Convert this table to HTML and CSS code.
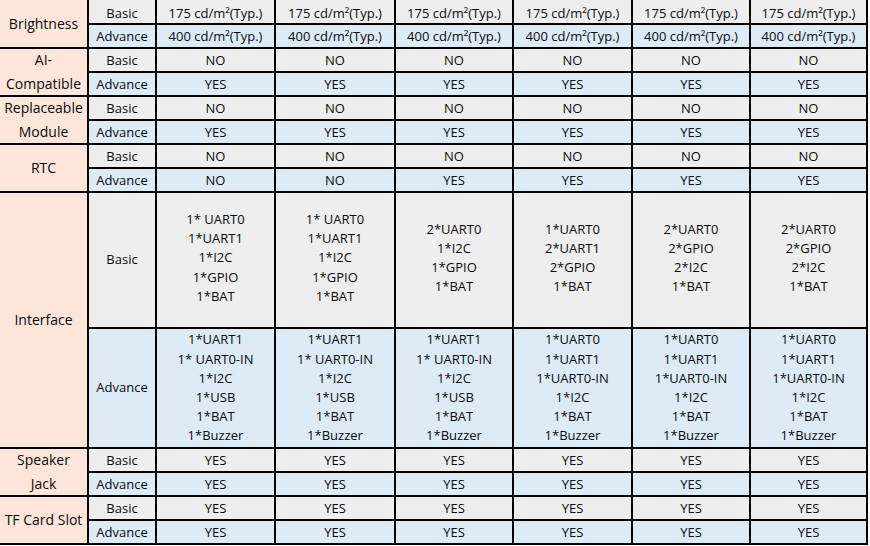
FILE: index.html
```html
<!DOCTYPE html>
<html lang="en">
<head>
<meta charset="utf-8">
<title>Spec table</title>
<link rel="stylesheet" href="styles.css">
</head>
<body>
<table class="spec">
  <colgroup>
    <col class="c-label">
    <col class="c-kind">
    <col class="c1">
    <col class="c2">
    <col class="c3">
    <col class="c4">
    <col class="c5">
    <col class="c6">
  </colgroup>
  <tbody>
    <tr class="r basic first">
      <td class="label" rowspan="2"><div class="lbl">Brightness</div></td>
      <td>Basic</td>
      <td>175 cd/m²(Typ.)</td><td>175 cd/m²(Typ.)</td><td>175 cd/m²(Typ.)</td><td>175 cd/m²(Typ.)</td><td>175 cd/m²(Typ.)</td><td>175 cd/m²(Typ.)</td>
    </tr>
    <tr class="r adv">
      <td>Advance</td>
      <td>400 cd/m²(Typ.)</td><td>400 cd/m²(Typ.)</td><td>400 cd/m²(Typ.)</td><td>400 cd/m²(Typ.)</td><td>400 cd/m²(Typ.)</td><td>400 cd/m²(Typ.)</td>
    </tr>

    <tr class="r basic">
      <td class="label" rowspan="2"><div class="lbl">AI-<br>Compatible</div></td>
      <td>Basic</td>
      <td>NO</td><td>NO</td><td>NO</td><td>NO</td><td>NO</td><td>NO</td>
    </tr>
    <tr class="r adv">
      <td>Advance</td>
      <td>YES</td><td>YES</td><td>YES</td><td>YES</td><td>YES</td><td>YES</td>
    </tr>

    <tr class="r basic">
      <td class="label" rowspan="2"><div class="lbl">Replaceable<br>Module</div></td>
      <td>Basic</td>
      <td>NO</td><td>NO</td><td>NO</td><td>NO</td><td>NO</td><td>NO</td>
    </tr>
    <tr class="r adv">
      <td>Advance</td>
      <td>YES</td><td>YES</td><td>YES</td><td>YES</td><td>YES</td><td>YES</td>
    </tr>

    <tr class="r basic">
      <td class="label" rowspan="2"><div class="lbl">RTC</div></td>
      <td>Basic</td>
      <td>NO</td><td>NO</td><td>NO</td><td>NO</td><td>NO</td><td>NO</td>
    </tr>
    <tr class="r adv">
      <td>Advance</td>
      <td>NO</td><td>NO</td><td>YES</td><td>YES</td><td>YES</td><td>YES</td>
    </tr>

    <tr class="r-ibasic basic multi">
      <td class="label" rowspan="2"><div class="lbl">Interface</div></td>
      <td>Basic</td>
      <td class="lift">1* UART0<br>1*UART1<br>1*I2C<br>1*GPIO<br>1*BAT</td>
      <td class="lift">1* UART0<br>1*UART1<br>1*I2C<br>1*GPIO<br>1*BAT</td>
      <td class="lift">2*UART0<br>1*I2C<br>1*GPIO<br>1*BAT</td>
      <td class="lift">1*UART0<br>2*UART1<br>2*GPIO<br>1*BAT</td>
      <td class="lift">2*UART0<br>2*GPIO<br>2*I2C<br>1*BAT</td>
      <td class="lift">2*UART0<br>2*GPIO<br>2*I2C<br>1*BAT</td>
    </tr>
    <tr class="r-iadv adv multi">
      <td>Advance</td>
      <td>1*UART1<br>1* UART0-IN<br>1*I2C<br>1*USB<br>1*BAT<br>1*Buzzer</td>
      <td>1*UART1<br>1* UART0-IN<br>1*I2C<br>1*USB<br>1*BAT<br>1*Buzzer</td>
      <td>1*UART1<br>1* UART0-IN<br>1*I2C<br>1*USB<br>1*BAT<br>1*Buzzer</td>
      <td>1*UART0<br>1*UART1<br>1*UART0-IN<br>1*I2C<br>1*BAT<br>1*Buzzer</td>
      <td>1*UART0<br>1*UART1<br>1*UART0-IN<br>1*I2C<br>1*BAT<br>1*Buzzer</td>
      <td>1*UART0<br>1*UART1<br>1*UART0-IN<br>1*I2C<br>1*BAT<br>1*Buzzer</td>
    </tr>

    <tr class="r basic">
      <td class="label" rowspan="2"><div class="lbl">Speaker<br>Jack</div></td>
      <td>Basic</td>
      <td>YES</td><td>YES</td><td>YES</td><td>YES</td><td>YES</td><td>YES</td>
    </tr>
    <tr class="r adv">
      <td>Advance</td>
      <td>YES</td><td>YES</td><td>YES</td><td>YES</td><td>YES</td><td>YES</td>
    </tr>

    <tr class="r basic">
      <td class="label" rowspan="2"><div class="lbl">TF Card Slot</div></td>
      <td>Basic</td>
      <td>YES</td><td>YES</td><td>YES</td><td>YES</td><td>YES</td><td>YES</td>
    </tr>
    <tr class="r adv">
      <td>Advance</td>
      <td>YES</td><td>YES</td><td>YES</td><td>YES</td><td>YES</td><td>YES</td>
    </tr>
  </tbody>
</table>
</body>
</html>
```

FILE: styles.css
```css
html, body {
  margin: 0;
  padding: 0;
  background: #ffffff;
}

body {
  width: 870px;
  height: 546px;
  overflow: hidden;
}

.spec {
  border-collapse: collapse;
  table-layout: fixed;
  width: 870px;
  margin: -2px 0 0 -2px;
  font-family: "Open Sans", "Noto Sans", "Liberation Sans", sans-serif;
  font-size: 13px;
  color: #0a0a0a;
}

.c-label { width: 89px; }
.c-kind { width: 68px; }
.c1 { width: 119px; }
.c2 { width: 120px; }
.c3 { width: 118px; }
.c4 { width: 119px; }
.c5 { width: 118px; }
.c6 { width: 117px; }

.spec td {
  border: 2px solid #000;
  padding: 0;
  text-align: center;
  vertical-align: middle;
  white-space: nowrap;
  overflow: hidden;
  line-height: 18px;
}

.r { height: 24px; }
.first { height: 25px; }
.r-ibasic { height: 136px; }
.r-iadv { height: 120px; }

.first td { padding-top: 3px; line-height: 17px; }

.basic td { background: #eeeeee; }
.adv td { background: #ddebf7; }

.spec td.label {
  background: #fde6d9;
  font-size: 14px;
  line-height: 18px;
  padding: 0;
}

.lbl {
  line-height: 24px;
  margin: -3px 0;
}

.multi td { line-height: 19.2px; }
.spec td.lift { padding-bottom: 4px; }
```
